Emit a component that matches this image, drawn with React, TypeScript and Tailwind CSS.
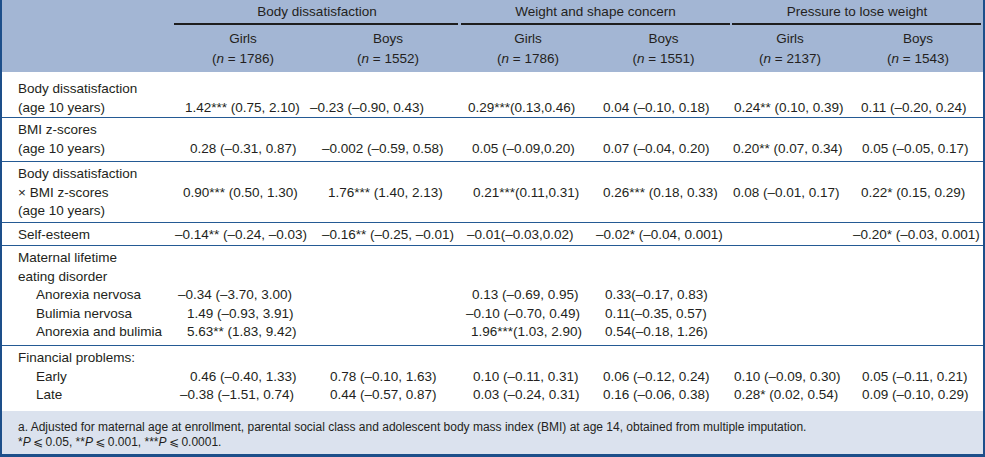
import React from 'react';

type Line = string | [string, string];

type Row = {
  pad: string;
  divider: boolean;
  cols: Line[][];
};

const sub = (t: string): Line => [t, 'pl-[34px]'];
const v = (t: string, pl: string): Line => [t, pl];

const rows: Row[] = [
  {
    pad: 'pt-[8px]',
    divider: true,
    cols: [
      ['Body dissatisfaction', '(age 10 years)'],
      ['', v('1.42*** (0.75, 2.10)', 'pl-[11px]')],
      ['', v('–0.23 (–0.90, 0.43)', 'pl-[1px]')],
      ['', v('0.29***(0.13,0.46)', 'pl-[8px]')],
      ['', v('0.04 (–0.10, 0.18)', 'pl-[7px]')],
      ['', v('0.24** (0.10, 0.39)', 'pl-[3px]')],
      ['', v('0.11 (–0.20, 0.24)', 'pl-[8px]')],
    ],
  },
  {
    pad: 'pt-[3px] pb-[3px]',
    divider: true,
    cols: [
      ['BMI z-scores', '(age 10 years)'],
      ['', v('0.28 (–0.31, 0.87)', 'pl-[16px]')],
      ['', v('–0.002 (–0.59, 0.58)', 'pl-[13px]')],
      ['', v('0.05 (–0.09,0.20)', 'pl-[12px]')],
      ['', v('0.07 (–0.04, 0.20)', 'pl-[7px]')],
      ['', v('0.20** (0.07, 0.34)', 'pl-[2px]')],
      ['', v('0.05 (–0.05, 0.17)', 'pl-[9px]')],
    ],
  },
  {
    pad: 'pt-[3px] pb-[1.5px]',
    divider: true,
    cols: [
      ['Body dissatisfaction', '\u00d7 BMI z-scores', '(age 10 years)'],
      ['', v('0.90*** (0.50, 1.30)', 'pl-[9px]')],
      ['', v('1.76*** (1.40, 2.13)', 'pl-[19px]')],
      ['', v('0.21***(0.11,0.31)', 'pl-[13px]')],
      ['', v('0.26*** (0.18, 0.33)', 'pl-[7px]')],
      ['', v('0.08 (–0.01, 0.17)', 'pl-[2px]')],
      ['', v('0.22* (0.15, 0.29)', 'pl-[8px]')],
    ],
  },
  {
    pad: 'pt-[3px] pb-[0.5px]',
    divider: true,
    cols: [
      ['Self-esteem'],
      [v('–0.14** (–0.24, –0.03)', 'pl-[1px]')],
      [v('–0.16** (–0.25, –0.01)', 'pl-[13px]')],
      [v('–0.01(–0.03,0.02)', 'pl-[7px]')],
      [v('–0.02* (–0.04, 0.001)', 'pl-0')],
      [''],
      [v('–0.20* (–0.03, 0.001)', 'pl-0')],
    ],
  },
  {
    pad: 'pt-[3px] pb-[3.5px]',
    divider: true,
    cols: [
      ['Maternal lifetime', 'eating disorder', sub('Anorexia nervosa'), sub('Bulimia nervosa'), sub('Anorexia and bulimia')],
      ['', '', v('–0.34 (–3.70, 3.00)', 'pl-[4px]'), v('1.49 (–0.93, 3.91)', 'pl-[13px]'), v('5.63** (1.83, 9.42)', 'pl-[13px]')],
      [''],
      ['', '', v('0.13 (–0.69, 0.95)', 'pl-[12px]'), v('–0.10 (–0.70, 0.49)', 'pl-[6px]'), v('1.96***(1.03, 2.90)', 'pl-[11px]')],
      ['', '', v('0.33(–0.17, 0.83)', 'pl-[9px]'), v('0.11(–0.35, 0.57)', 'pl-[9px]'), v('0.54(–0.18, 1.26)', 'pl-[9px]')],
      [''],
      [''],
    ],
  },
  {
    pad: 'pt-[3px] pb-[6.5px]',
    divider: false,
    cols: [
      ['Financial problems:', sub('Early'), sub('Late')],
      ['', v('0.46 (–0.40, 1.33)', 'pl-[16px]'), v('–0.38 (–1.51, 0.74)', 'pl-[6px]')],
      ['', v('0.78 (–0.10, 1.63)', 'pl-[21px]'), v('0.44 (–0.57, 0.87)', 'pl-[21px]')],
      ['', v('0.10 (–0.11, 0.31)', 'pl-[13px]'), v('0.03 (–0.24, 0.31)', 'pl-[13px]')],
      ['', v('0.06 (–0.12, 0.24)', 'pl-[7px]'), v('0.16 (–0.06, 0.38)', 'pl-[7px]')],
      ['', v('0.10 (–0.09, 0.30)', 'pl-[3px]'), v('0.28* (0.02, 0.54)', 'pl-[3px]')],
      ['', v('0.05 (–0.11, 0.21)', 'pl-[9px]'), v('0.09 (–0.10, 0.29)', 'pl-[9px]')],
    ],
  },
];

const groups = [
  { title: 'Body dissatisfaction', line: 'mr-[2px]' },
  { title: 'Weight and shape concern', line: 'mx-[1px]' },
  { title: 'Pressure to lose weight', line: 'ml-[1px] mr-[2px]' },
];

const subHeads = [
  { sex: 'Girls', n: '1786', cls: 'pl-[3px]' },
  { sex: 'Boys', n: '1552', cls: 'pl-[7px]' },
  { sex: 'Girls', n: '1786', cls: '' },
  { sex: 'Boys', n: '1551', cls: '' },
  { sex: 'Girls', n: '2137', cls: 'pr-[4px]' },
  { sex: 'Boys', n: '1543', cls: '' },
];

const gridCols = 'grid grid-cols-[172px_135px_151px_136px_135px_122px_1fr]';

function Cell({ lines, first }: { lines: Line[]; first: boolean }) {
  return (
    <div className="flex flex-col">
      {lines.map((l, i) => {
        const text = typeof l === 'string' ? l : l[0];
        const cls = typeof l === 'string' ? (first ? 'pl-[16px]' : '') : l[1];
        return (
          <div key={i} className={`h-[18.5px] leading-[18.5px] whitespace-nowrap ${cls}`}>
            {text || '\u00a0'}
          </div>
        );
      })}
    </div>
  );
}

export default function App() {
  return (
    <div className="w-[985px] h-[457px] bg-white text-[#231f20] font-['Liberation_Sans','DejaVu_Sans',sans-serif] text-[13.5px] border-l-2 border-r-2 border-b-[3px] border-[#1d4f8a] flex flex-col">
      {/* Header */}
      <div className="bg-[#a3b6d4] pb-[3px]">
        <div className={gridCols}>
          <div />
          {groups.map((g) => (
            <div key={g.title} className="col-span-2 flex flex-col">
              <div className="pt-[3px] leading-[18px] text-center whitespace-nowrap">{g.title}</div>
              <div className={`h-[2px] mt-[2px] bg-[#1e1e1e] ${g.line}`} />
            </div>
          ))}
        </div>
        <div className={`${gridCols} pt-[4px]`}>
          <div />
          {subHeads.map((s, i) => (
            <div key={i} className={`text-center leading-[20px] whitespace-nowrap ${s.cls}`}>
              <div>{s.sex}</div>
              <div>
                (<i>n</i> = {s.n})
              </div>
            </div>
          ))}
        </div>
      </div>

      {/* Body rows */}
      {rows.map((r, i) => (
        <div key={i} className={`${gridCols} ${r.pad} ${r.divider ? 'border-b border-[#245a94]' : ''}`}>
          {r.cols.map((c, j) => (
            <Cell key={j} lines={c} first={j === 0} />
          ))}
        </div>
      ))}

      {/* Footnote */}
      <div className="flex-1 bg-[#dbe2ee] pt-[9px] pl-[16px] text-[12px] leading-[15px]">
        <p>
          a. Adjusted for maternal age at enrollment, parental social class and adolescent body mass index (BMI) at age 14,
          obtained from multiple imputation.
        </p>
        <p>
          *<i>P</i>{'\u2009⩽\u2009'}0.05, **<i>P</i>{'\u2009⩽\u2009'}0.001, ***<i>P</i>{'\u2009⩽\u2009'}0.0001.
        </p>
      </div>
    </div>
  );
}
